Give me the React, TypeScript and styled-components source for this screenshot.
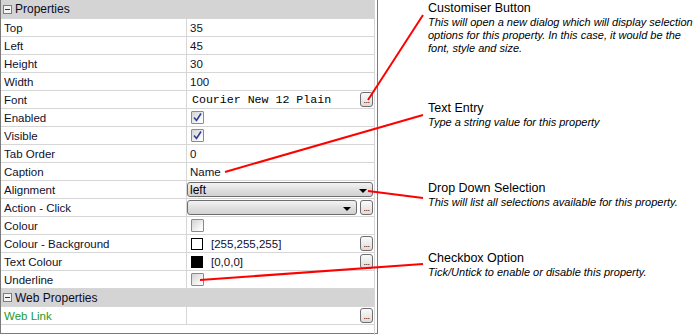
import React from 'react'
import styled, { createGlobalStyle } from 'styled-components'

const GlobalStyle = createGlobalStyle`
  html, body {
    margin: 0;
    padding: 0;
    background: #fff;
  }
  body {
    font-family: 'Liberation Sans', Arial, sans-serif;
  }
`

const Page = styled.div`
  position: relative;
  width: 700px;
  height: 335px;
  display: flex;
  overflow: hidden;
`

const Panel = styled.div`
  width: 378px;
  height: 334px;
  box-sizing: border-box;
  border: 1px solid #7a7a7a;
  border-top: none;
  padding-right: 2px;
  font-size: 11px;
  color: #10102a;
`

const Grid = styled.div`
  border-right: 1px solid #d6d6d6;
`

const SectionHeader = styled.div<{ $divided?: boolean }>`
  height: 18px;
  box-sizing: border-box;
  border-top: ${({ $divided }) => ($divided ? '1px solid #d6d6d6' : 'none')};
  background: #d4d4d4;
  display: flex;
  align-items: center;
  padding-left: 2px;
  gap: 3px;
  font-size: 12px;
  color: #0c0c24;
`

const Toggle = styled.span`
  width: 7px;
  height: 7px;
  border: 1px solid #7c7c7c;
  background: #f4f4f4;
  display: flex;
  align-items: center;
  justify-content: center;

  &::after {
    content: '';
    width: 5px;
    height: 1px;
    background: #333;
  }
`

const Row = styled.div`
  height: 18px;
  box-sizing: border-box;
  border-top: 1px solid #d6d6d6;
  display: grid;
  grid-template-columns: 186px 1fr;
`

const NameCell = styled.div<{ $link?: boolean }>`
  border-right: 1px solid #d6d6d6;
  padding-left: 3px;
  display: flex;
  align-items: center;
  font-size: 11.5px;
  color: ${({ $link }) => ($link ? '#1f9a1f' : '#10102a')};
`

const ValueCell = styled.div`
  display: flex;
  align-items: center;
  padding-left: 3px;
  padding-right: 1px;
  gap: 3px;
  font-size: 11.5px;
  min-width: 0;
`

const Mono = styled.span`
  font-family: 'Liberation Mono', 'Courier New', monospace;
  font-size: 11.6px;
  color: #000;
  padding-left: 2px;
  flex: 1;
`

const Grow = styled.span`
  flex: 1;
`

const Check = styled.span`
  width: 11px;
  height: 11px;
  border: 1px solid #8a8a8a;
  border-radius: 1px;
  background: linear-gradient(135deg, #d2d2d2 0%, #f6f6f6 70%, #ffffff 100%);
  display: flex;
  align-items: center;
  justify-content: center;
  margin-left: 1px;
`

const Swatch = styled.span<{ $fill: string }>`
  width: 10px;
  height: 10px;
  border: 1px solid #000;
  background: ${({ $fill }) => $fill};
  margin-left: 1px;
  margin-right: 5px;
`

const Dropdown = styled.div`
  flex: 1;
  height: 15px;
  box-sizing: border-box;
  border: 1px solid #6e6e6e;
  border-radius: 3px;
  background: linear-gradient(#f3f3f3, #dedede 55%, #d2d2d2);
  display: flex;
  align-items: center;
  padding: 0 5px 0 2px;
  font-size: 12px;
  color: #000;
  margin-left: -3px;
`

const Arrow = styled.span`
  margin-left: auto;
  width: 0;
  height: 0;
  border-left: 4px solid transparent;
  border-right: 4px solid transparent;
  border-top: 4px solid #000;
  margin-top: 2px;
`

const DotsButton = styled.span`
  width: 13px;
  height: 15px;
  box-sizing: border-box;
  border: 1px solid #6e6e6e;
  border-radius: 3px;
  background: linear-gradient(#fbfbfb, #dcdcdc);
  display: flex;
  align-items: flex-end;
  justify-content: center;
  font-size: 9px;
  line-height: 9px;
  color: #000;
  letter-spacing: -0.5px;
  padding-bottom: 1px;
  margin-left: auto;
`

const Notes = styled.div`
  padding-left: 50px;
  display: flex;
  flex-direction: column;
  color: #000;
`

const Callout = styled.div<{ $top: number }>`
  margin-top: ${({ $top }) => $top}px;
`

const CalloutTitle = styled.div`
  font-size: 12.5px;
  line-height: 15px;
`

const CalloutText = styled.div`
  font-size: 11px;
  font-style: italic;
  line-height: 13px;
  width: 270px;
`

const Leaders = styled.svg`
  position: absolute;
  left: 0;
  top: 0;
  pointer-events: none;
`

const Tick = () => (
  <svg width="9" height="9" viewBox="0 0 9 9">
    <path d="M1 4.5 L3.5 7.5 L8 0.5" fill="none" stroke="#2c3f96" strokeWidth="1.6" />
  </svg>
)

type Prop = { name: string; value?: React.ReactNode; link?: boolean }

const props: Prop[] = [
  { name: 'Top', value: '35' },
  { name: 'Left', value: '45' },
  { name: 'Height', value: '30' },
  { name: 'Width', value: '100' },
  {
    name: 'Font',
    value: (
      <>
        <Mono>Courier New 12 Plain</Mono>
        <DotsButton>...</DotsButton>
      </>
    ),
  },
  { name: 'Enabled', value: <Check><Tick /></Check> },
  { name: 'Visible', value: <Check><Tick /></Check> },
  { name: 'Tab Order', value: '0' },
  { name: 'Caption', value: 'Name' },
  {
    name: 'Alignment',
    value: (
      <Dropdown>
        left
        <Arrow />
      </Dropdown>
    ),
  },
  {
    name: 'Action - Click',
    value: (
      <>
        <Dropdown>
          <Arrow />
        </Dropdown>
        <DotsButton>...</DotsButton>
      </>
    ),
  },
  { name: 'Colour', value: <Check /> },
  {
    name: 'Colour - Background',
    value: (
      <>
        <Swatch $fill="#fff" />
        <Grow>[255,255,255]</Grow>
        <DotsButton>...</DotsButton>
      </>
    ),
  },
  {
    name: 'Text Colour',
    value: (
      <>
        <Swatch $fill="#000" />
        <Grow>[0,0,0]</Grow>
        <DotsButton>...</DotsButton>
      </>
    ),
  },
  { name: 'Underline', value: <Check /> },
]

const webProps: Prop[] = [
  { name: 'Web Link', link: true, value: <DotsButton>...</DotsButton> },
]

const PropRow = ({ name, value, link }: Prop) => (
  <Row>
    <NameCell $link={link}>{name}</NameCell>
    <ValueCell>{value}</ValueCell>
  </Row>
)

const App = () => (
  <Page>
    <GlobalStyle />
    <Panel>
      <Grid>
        <SectionHeader>
          <Toggle />
          Properties
        </SectionHeader>
        {props.map((p) => (
          <PropRow key={p.name} {...p} />
        ))}
        <SectionHeader $divided>
          <Toggle />
          Web Properties
        </SectionHeader>
        {webProps.map((p) => (
          <PropRow key={p.name} {...p} />
        ))}
        <Row />
      </Grid>
    </Panel>
    <Notes>
      <Callout $top={1}>
        <CalloutTitle>Customiser Button</CalloutTitle>
        <CalloutText>
          This will open a new dialog which will display selection options for this property. In
          this case, it would be the font, style and size.
        </CalloutText>
      </Callout>
      <Callout $top={46}>
        <CalloutTitle>Text Entry</CalloutTitle>
        <CalloutText>Type a string value for this property</CalloutText>
      </Callout>
      <Callout $top={52}>
        <CalloutTitle>Drop Down Selection</CalloutTitle>
        <CalloutText>This will list all selections available for this property.</CalloutText>
      </Callout>
      <Callout $top={42}>
        <CalloutTitle>Checkbox Option</CalloutTitle>
        <CalloutText>Tick/Untick to enable or disable this property.</CalloutText>
      </Callout>
    </Notes>
    <Leaders width="700" height="335">
      <g stroke="#f00" strokeWidth="2" fill="none">
        <line x1="423" y1="15" x2="368" y2="100" />
        <line x1="423" y1="115" x2="225" y2="172" />
        <line x1="423" y1="198" x2="368" y2="191" />
        <line x1="423" y1="264" x2="200" y2="280" />
      </g>
    </Leaders>
  </Page>
)

export default App
